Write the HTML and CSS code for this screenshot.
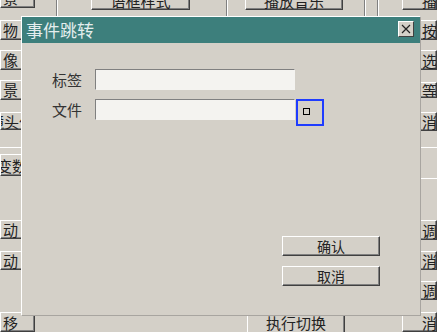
FILE: index.html
```html
<!DOCTYPE html>
<html lang="zh">
<head>
    <meta charset="UTF-8">
    <meta name="viewport" content="width=device-width, initial-scale=1.0">
    <title>事件跳转</title>
    <link rel="stylesheet" href="styles.css">
</head>
<body>
    <div class="desk">
        <div class="col col-left">
            <div class="btn h20 first">景</div>
            <div class="btn h20 g12">物</div>
            <div class="btn h20 g10">像</div>
            <div class="btn h20 g10">景</div>
            <div class="btn h19 g12 cut">镜头位置</div>
            <div class="sep g17"></div>
            <div class="btn h22 g6 cut2">变数</div>
            <div class="btn h19 g44">动</div>
            <div class="btn h19 g12">动</div>
            <div class="btn h20 g42">移</div>
        </div>

        <div class="mid">
            <div class="mid-top">
                <span class="vline"></span>
                <div class="btn wide">语框样式</div>
                <span class="vline"></span>
                <div class="btn wide">播放音乐</div>
                <span class="vline"></span>
                <span class="vline"></span>
            </div>
            <div class="mid-bottom">
                <div class="btn wide exec">执行切换</div>
            </div>
        </div>

        <div class="col col-right">
            <div class="btn h20 first">播放</div>
            <div class="btn h20 g10">按钮</div>
            <div class="btn h20 g10">选项</div>
            <div class="btn h16 g12">等待</div>
            <div class="btn h19 g14">消息</div>
            <div class="sep g16"></div>
            <div class="sep g30"></div>
            <div class="btn h20 g41">调用</div>
            <div class="btn h19 g11">消息</div>
            <div class="btn h19 g11">调用</div>
            <div class="btn h20 g12">消息</div>
        </div>

        <div class="dialog">
            <div class="titlebar">
                <span class="title">事件跳转</span>
                <span class="close">
                    <svg width="10" height="10" viewBox="0 0 10 10">
                        <path d="M1 1 L9 9 M9 1 L1 9" stroke="#222" stroke-width="1.2" fill="none"/>
                    </svg>
                </span>
            </div>
            <div class="dlg-body">
                <div class="field">
                    <label class="lbl" for="tag">标签</label>
                    <input class="txt" type="text" id="tag">
                </div>
                <div class="field">
                    <label class="lbl" for="file">文件</label>
                    <input class="txt" type="text" id="file">
                    <span class="pick"><span class="dot"></span></span>
                </div>
                <div class="actions">
                    <div class="btn act">确认</div>
                    <div class="btn act">取消</div>
                </div>
            </div>
        </div>
    </div>
</body>
</html>
```

FILE: styles.css
```css
body {
    margin: 0;
    background-color: #d4d0c8;
    font-family: "Noto Sans CJK SC", "DejaVu Sans", sans-serif;
}
.desk {
    position: relative;
    display: flex;
    width: 437px;
    height: 332px;
    overflow: hidden;
    background-color: #d4d0c8;
}
.btn {
    box-sizing: border-box;
    display: flex;
    align-items: center;
    font-size: 15px;
    line-height: 1;
    color: #222;
    background-color: #d4d0c8;
    border-top: 1px solid #ffffff;
    border-left: 1px solid #ffffff;
    border-right: 1px solid #404040;
    border-bottom: 1px solid #404040;
    box-shadow: inset -1px -1px 0 #808080;
    white-space: nowrap;
    overflow: hidden;
}
.col {
    display: flex;
    flex-direction: column;
    flex: none;
}
.col-left {
    width: 35px;
}
.col-left .btn {
    padding-left: 2px;
}
.col-left .cut {
    padding-left: 0;
    text-indent: -12px;
}
.col-left .cut2 {
    padding-left: 0;
    text-indent: -4px;
}
.col-right {
    width: 35px;
}
.col-right .btn {
    padding-left: 19px;
}
.first { margin-top: -12px; }
.col-right .first { margin-top: -10px; }
.h16 { height: 16px; }
.h19 { height: 19px; }
.h20 { height: 20px; }
.h22 { height: 22px; }
.g6 { margin-top: 6px; }
.g10 { margin-top: 10px; }
.g11 { margin-top: 11px; }
.g12 { margin-top: 12px; }
.g14 { margin-top: 14px; }
.g16 { margin-top: 16px; }
.g17 { margin-top: 17px; }
.g30 { margin-top: 30px; }
.g41 { margin-top: 41px; }
.g42 { margin-top: 42px; }
.g44 { margin-top: 44px; }
.sep {
    height: 0;
    border-top: 1px solid #ffffff;
}
.mid {
    flex: 1;
    display: flex;
    flex-direction: column;
    justify-content: space-between;
}
.mid-top {
    display: flex;
    align-items: flex-start;
    height: 20px;
}
.vline {
    width: 0;
    height: 20px;
    border-left: 1px solid #808080;
    border-right: 1px solid #ffffff;
}
.mid-top .vline:nth-child(1) { margin-left: 21px; }
.mid-top .vline:nth-child(3) { margin-left: 36px; }
.mid-top .vline:nth-child(5) { margin-left: 21px; }
.mid-top .vline:nth-child(6) { margin-left: 11px; }
.wide {
    width: 99px;
    height: 20px;
    justify-content: center;
    margin-top: -10px;
}
.mid-top .btn:nth-child(2) { margin-left: 33px; }
.mid-top .btn:nth-child(4) { margin-left: 17px; width: 98px; }
.mid-bottom {
    display: flex;
    height: 20px;
}
.exec {
    margin-top: 0;
    margin-left: 212px;
    width: 98px;
    height: 24px;
    align-items: flex-start;
    padding-top: 2px;
}

/* dialog window */
.dialog {
    position: absolute;
    left: 21px;
    top: 16px;
    width: 400px;
    height: 300px;
    box-sizing: border-box;
    display: flex;
    flex-direction: column;
    background-color: #d4d0c8;
    border-top: 1px solid #ffffff;
    border-left: 1px solid #ffffff;
    border-right: 1px solid #a8a5a0;
    border-bottom: 1px solid #a8a5a0;
}
.titlebar {
    display: flex;
    justify-content: space-between;
    align-items: flex-start;
    height: 26px;
    padding: 0 6px 0 4px;
    background-color: #3d7f7c;
}
.title {
    color: #e4eeee;
    font-size: 17px;
    line-height: 26px;
}
.close {
    box-sizing: border-box;
    display: flex;
    justify-content: center;
    align-items: center;
    width: 16px;
    height: 16px;
    margin-top: 4px;
    background-color: #d4d0c8;
    border-top: 1px solid #ffffff;
    border-left: 1px solid #ffffff;
    border-right: 1px solid #404040;
    border-bottom: 1px solid #404040;
}
.dlg-body {
    flex: 1;
    display: flex;
    flex-direction: column;
    padding: 26px 40px 29px 30px;
}
.field {
    display: flex;
    align-items: flex-start;
    margin-bottom: 9px;
}
.lbl {
    width: 43px;
    height: 21px;
    font-size: 15px;
    line-height: 21px;
    color: #333;
}
.txt {
    box-sizing: border-box;
    width: 200px;
    height: 21px;
    margin: 0;
    padding: 0 3px;
    background-color: #f4f3f0;
    border-top: 1px solid #808080;
    border-left: 1px solid #808080;
    border-right: 1px solid #f4f3f0;
    border-bottom: 1px solid #f4f3f0;
    outline: none;
}
.pick {
    box-sizing: border-box;
    width: 28px;
    height: 27px;
    margin-left: 1px;
    padding: 7px 0 0 5px;
    border: 2px solid #1f3cff;
}
.dot {
    display: block;
    box-sizing: border-box;
    width: 7px;
    height: 7px;
    border: 1px solid #000;
}
.actions {
    margin-top: auto;
    display: flex;
    flex-direction: column;
    align-items: flex-end;
    gap: 10px;
}
.act {
    width: 98px;
    height: 20px;
    justify-content: center;
    font-size: 14px;
}
```
